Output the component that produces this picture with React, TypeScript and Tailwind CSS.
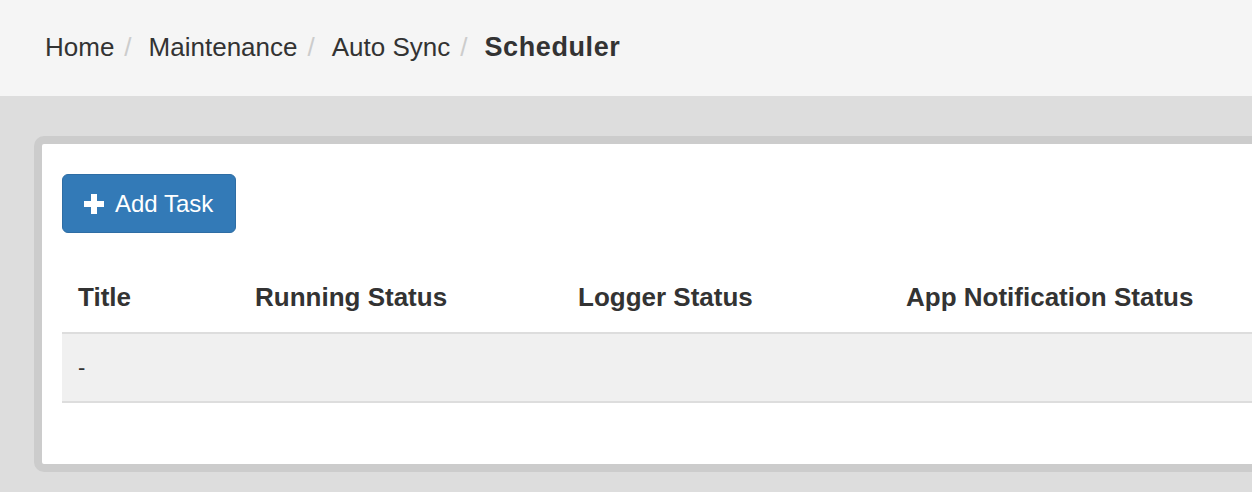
import React from 'react'

const crumbs = ['Home', 'Maintenance', 'Auto Sync']
const columns = [
  { label: 'Title', width: 'w-[177px]' },
  { label: 'Running Status', width: 'w-[323px]' },
  { label: 'Logger Status', width: 'w-[328px]' },
  { label: 'App Notification Status', width: 'w-[400px]' },
]

const PlusIcon = () => (
  <svg width="20" height="20" viewBox="0 0 20 20" className="shrink-0">
    <path d="M7 0h6v7h7v6h-7v7H7v-7H0V7h7z" fill="#ffffff" />
  </svg>
)

export default function App() {
  return (
    <div className="w-[1252px] h-[492px] overflow-hidden bg-[#dddddd] font-['Liberation_Sans',Arial,sans-serif] text-[#333333]">
      {/* breadcrumb bar */}
      <div className="h-[96px] bg-[#f5f5f5] flex items-center pl-[45px] text-[26px] pb-[2px]">
        {crumbs.map((c) => (
          <React.Fragment key={c}>
            <span>{c}</span>
            <span className="text-[#cccccc] ml-[10px] mr-[17px]">/</span>
          </React.Fragment>
        ))}
        <span className="font-bold text-[27px] tracking-[0.6px]">Scheduler</span>
      </div>

      {/* content */}
      <div className="pt-[40px] pl-[34px]">
        <div className="w-[1260px] border-[8px] border-[#cccccc] rounded-[10px] bg-white pt-[30px] pl-[20px] pb-[61px]">
          <button className="h-[59px] w-[174px] flex items-center gap-[11px] pl-[21px] bg-[#337ab7] border border-[#2e6da4] rounded-[6px] text-white text-[24px]">
            <PlusIcon />
            <span>Add Task</span>
          </button>

          <table className="mt-[29px] table-fixed border-collapse w-[1228px]">
            <thead>
              <tr className="border-b-2 border-[#dddddd]">
                {columns.map((col) => (
                  <th key={col.label} className={`${col.width} h-[71px] pl-[16px] text-left align-middle font-bold text-[26px] text-[#333333]`}>
                    {col.label}
                  </th>
                ))}
              </tr>
            </thead>
            <tbody>
              <tr className="border-b-2 border-[#dddddd] bg-[#f0f0f0]">
                <td className="h-[69px] pl-[16px] text-[22px] align-middle">-</td>
                <td />
                <td />
                <td />
              </tr>
            </tbody>
          </table>
        </div>
      </div>
    </div>
  )
}
